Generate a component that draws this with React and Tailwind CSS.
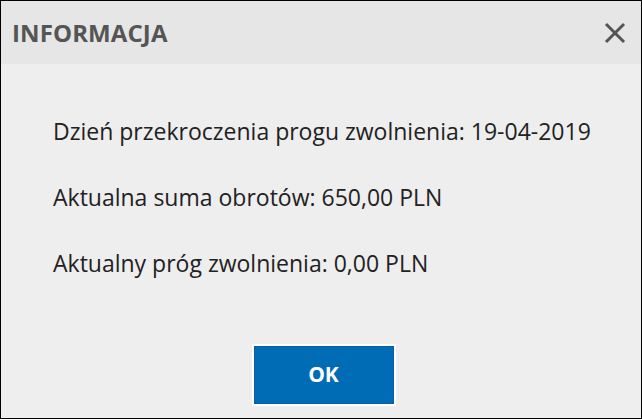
export default function App() {
  return (
    <div className="w-[642px] h-[419px] border border-black bg-[#eeeeee] flex flex-col font-['Open_Sans',sans-serif]">
      <div className="h-[63px] bg-[#e6e6e6] flex items-center justify-between pl-[11px] pr-[15px] shrink-0">
        <h1 className="text-[24px] font-bold text-[#555555] tracking-[0.1px]">INFORMACJA</h1>
        <svg width="22" height="22" viewBox="0 0 22 22" className="text-[#555555]">
          <path d="M2 2 L20 20 M20 2 L2 20" stroke="currentColor" strokeWidth="3" />
        </svg>
      </div>
      <div className="flex-1 flex flex-col pl-[52px] pt-[52px] text-[23px] text-[#222222] leading-[31px]">
        <p>Dzień przekroczenia progu zwolnienia: 19-04-2019</p>
        <p className="mt-[35px]">Aktualna suma obrotów: 650,00 PLN</p>
        <p className="mt-[35px]">Aktualny próg zwolnienia: 0,00 PLN</p>
      </div>
      <div className="flex justify-center pb-[14px] pl-[5px]">
        <button className="w-[140px] h-[58px] bg-[#006cb5] border border-[#0a5fa0] outline outline-2 outline-white text-white font-bold text-[21px]">
          OK
        </button>
      </div>
    </div>
  );
}
